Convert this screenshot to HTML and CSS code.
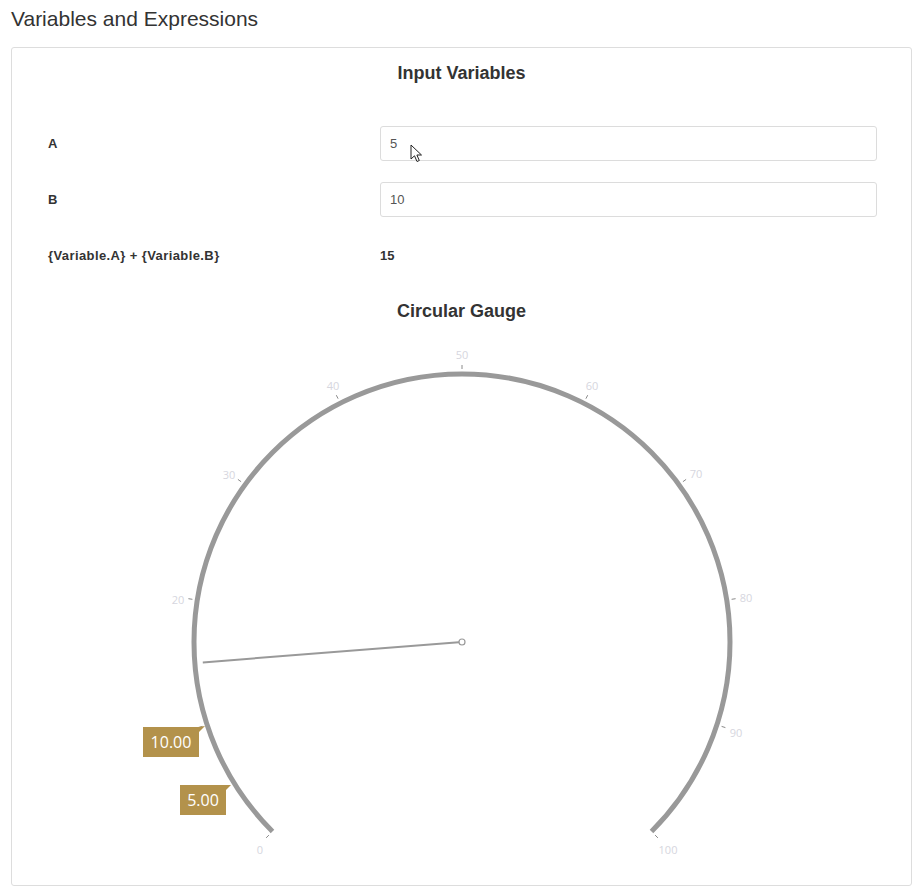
FILE: index.html
```html
<!DOCTYPE html>
<html>
<head>
<meta charset="utf-8">
<link rel="stylesheet" href="styles.css">
</head>
<body>
<h1 class="page-title">Variables and Expressions</h1>
<div class="card">
  <h2 class="section-title">Input Variables</h2>
  <div class="rows">
    <div class="row">
      <div class="label">A</div>
      <div class="value"><input class="field" type="text" value="5"></div>
    </div>
    <div class="row">
      <div class="label">B</div>
      <div class="value"><input class="field" type="text" value="10"></div>
    </div>
    <div class="row">
      <div class="label">{Variable.A} + {Variable.B}</div>
      <div class="value result">15</div>
    </div>
  </div>
  <h2 class="section-title gauge-title">Circular Gauge</h2>
  <svg class="gauge" width="899" height="563" viewBox="0 0 899 563">
    <path d="M260.5 509.5 A268 268 0 1 1 639.5 509.5" fill="none" stroke="#999" stroke-width="5"/>
    <g stroke="#8a8a8a" stroke-width="1">
      <line x1="256.9" y1="513.1" x2="254.1" y2="515.9"/>
      <line x1="190.4" y1="404.4" x2="186.6" y2="405.6"/>
      <line x1="180.4" y1="277.3" x2="176.4" y2="276.7"/>
      <line x1="229.1" y1="159.7" x2="225.9" y2="157.4"/>
      <line x1="326.1" y1="76.7" x2="324.3" y2="73.2"/>
      <line x1="450" y1="47" x2="450" y2="43"/>
      <line x1="573.9" y1="76.7" x2="575.7" y2="73.2"/>
      <line x1="670.9" y1="159.7" x2="674.1" y2="157.4"/>
      <line x1="719.6" y1="277.3" x2="723.6" y2="276.7"/>
      <line x1="709.6" y1="404.4" x2="713.4" y2="405.6"/>
      <line x1="643.1" y1="513.1" x2="645.9" y2="515.9"/>
    </g>
    <g class="ticklabels" text-anchor="middle">
      <text x="248" y="532">0</text>
      <text x="166" y="282">20</text>
      <text x="217" y="157">30</text>
      <text x="321" y="68">40</text>
      <text x="450" y="37">50</text>
      <text x="580" y="68">60</text>
      <text x="684" y="156">70</text>
      <text x="734" y="280">80</text>
      <text x="724" y="415">90</text>
      <text x="656" y="532">100</text>
    </g>
    <line x1="450" y1="320" x2="190.8" y2="340.4" stroke="#999" stroke-width="2"/>
    <circle cx="450" cy="320" r="3" fill="#fff" stroke="#999" stroke-width="1.2"/>
    <g class="marker">
      <rect x="131" y="405" width="56" height="30" fill="#b3924b"/>
      <polygon points="186,405 193,404 186,411" fill="#b3924b"/>
      <text x="159" y="426" text-anchor="middle">10.00</text>
    </g>
    <g class="marker">
      <rect x="168" y="463" width="46" height="30" fill="#b3924b"/>
      <polygon points="213,463 219,463 213,469" fill="#b3924b"/>
      <text x="191" y="484" text-anchor="middle">5.00</text>
    </g>
  </svg>
</div>
<svg class="cursor" width="14" height="20" viewBox="0 0 14 20">
  <path d="M1 1 L1 15 L4.5 11.8 L7 17.5 L9.3 16.5 L6.9 11 L11.5 11 Z" fill="#fff" stroke="#222" stroke-width="1" stroke-linejoin="round"/>
</svg>
</body>
</html>
```

FILE: styles.css
```css
html, body {
  margin: 0;
  padding: 0;
  background: #fff;
}
body {
  position: relative;
  width: 924px;
  font-family: "Liberation Sans", Arial, sans-serif;
  color: #333;
}
.page-title {
  margin: 0;
  padding: 8px 11px 0;
  font-size: 21px;
  line-height: 22px;
  font-weight: normal;
  color: #333;
}
.card {
  margin: 17px 12px 0 11px;
  border: 1px solid #ddd;
  border-radius: 3px;
  background: #fff;
  padding-top: 14px;
}
.section-title {
  margin: 0;
  text-align: center;
  font-size: 18px;
  line-height: 22px;
  font-weight: bold;
  color: #333;
}
.rows {
  display: flex;
  flex-direction: column;
  gap: 21px;
  padding: 42px 34px 0 36px;
}
.row {
  display: grid;
  grid-template-columns: 332px 1fr;
  height: 35px;
  align-items: center;
}
.label {
  font-size: 13px;
  letter-spacing: 0.4px;
  font-weight: bold;
  color: #333;
}
.value.result {
  font-size: 13px;
  font-weight: bold;
  color: #333;
}
.field {
  box-sizing: border-box;
  width: 100%;
  height: 35px;
  border: 1px solid #dcdcdc;
  border-radius: 3px;
  padding: 0 9px;
  font-family: "Liberation Sans", Arial, sans-serif;
  font-size: 13px;
  color: #555;
  background: #fff;
  outline: none;
}
.gauge-title {
  margin-top: 27px;
}
.gauge {
  display: block;
}
.ticklabels text {
  font-family: "Open Sans", sans-serif;
  font-size: 11px;
  fill: #d6d6de;
}
.marker text {
  font-family: "Open Sans", sans-serif;
  font-size: 16px;
  fill: #fff;
}
.cursor {
  position: absolute;
  left: 410px;
  top: 144px;
}
```
